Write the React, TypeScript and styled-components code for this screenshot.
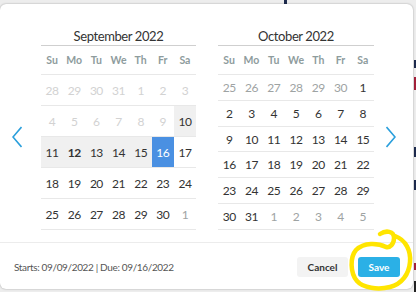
import React from "react";
import styled, { createGlobalStyle } from "styled-components";

const Global = createGlobalStyle`
  html, body { margin: 0; padding: 0; }
  body {
    width: 416px;
    height: 292px;
    overflow: hidden;
    background: #ededed;
    font-family: "Lato", "Noto Sans", sans-serif;
  }
`;

const Stage = styled.div`
  position: relative;
  width: 416px;
  height: 292px;
  padding-top: 4px;
  box-sizing: border-box;
`;

const Mark = styled.span<{ $x: number; $y: number; $w: number; $h: number; $c: string }>`
  position: absolute;
  left: ${(p) => p.$x}px;
  top: ${(p) => p.$y}px;
  width: ${(p) => p.$w}px;
  height: ${(p) => p.$h}px;
  background: ${(p) => p.$c};
`;

const Modal = styled.div`
  position: relative;
  width: 413px;
  height: 285px;
  background: #fff;
  border-radius: 6px;
  box-shadow: 0 0 2px rgba(0, 0, 0, 0.35);
  display: flex;
  flex-direction: column;
`;

const Body = styled.div`
  display: flex;
  padding: 24px 0 0 12px;
`;

const Nav = styled.button<{ $side: "left" | "right" }>`
  border: 0;
  background: transparent;
  padding: 0;
  margin-top: 98px;
  width: 10px;
  height: 22px;
  align-self: flex-start;
  margin-right: ${(p) => (p.$side === "left" ? "19px" : "0")};
  margin-left: ${(p) => (p.$side === "right" ? "12px" : "0")};
  cursor: pointer;
`;

const Calendars = styled.div`
  display: flex;
  gap: 22px;
`;

const Calendar = styled.div<{ $w: number }>`
  width: ${(p) => p.$w}px;
  display: flex;
  flex-direction: column;
`;

const Title = styled.div`
  height: 17px;
  line-height: 17px;
  text-align: center;
  font-size: 13px;
  color: #333;
  letter-spacing: -0.4px;
  border-bottom: 1px solid #cfcfcf;
`;

const HeadRow = styled.div`
  display: grid;
  grid-template-columns: repeat(7, 1fr);
  height: 28px;
  align-items: center;
`;

const HeadCell = styled.div`
  text-align: center;
  font-size: 10.5px;
  font-weight: 700;
  color: #8e9c9d;
`;

const Weeks = styled.div`
  display: flex;
  flex-direction: column;
  height: 155px;
  border-bottom: 1px solid #e8e8e8;
`;

const Week = styled.div`
  flex: 1;
  display: grid;
  grid-template-columns: repeat(7, 1fr);
  border-top: 1px solid #e8e8e8;
`;

type Kind = "disabled" | "outside" | "normal" | "range" | "selected";

const Day = styled.div<{ $kind: Kind; $bold?: boolean }>`
  display: flex;
  align-items: center;
  justify-content: center;
  font-size: 12px;
  letter-spacing: -0.5px;
  font-weight: ${(p) => (p.$bold ? 700 : 400)};
  color: ${(p) =>
    p.$kind === "disabled"
      ? "#d2d2d2"
      : p.$kind === "outside"
      ? "#9ea3a3"
      : p.$kind === "selected"
      ? "#ffffff"
      : "#333"};
  background: ${(p) =>
    p.$kind === "range" ? "#f0f0f0" : p.$kind === "selected" ? "#4a90e2" : "transparent"};
`;

const Footer = styled.div`
  margin-top: 12px;
  border-top: 1px solid #ececec;
  flex: 1;
  display: flex;
  align-items: center;
  padding: 0 13px 0 14px;
`;

const Info = styled.div`
  font-size: 10px;
  color: #555;
  letter-spacing: -0.35px;
  flex: 1;
  padding-top: 2px;
`;

const Btn = styled.button<{ $primary?: boolean }>`
  height: 20px;
  border: 0;
  border-radius: 3px;
  font-family: "Lato", "Noto Sans", sans-serif;
  font-weight: 700;
  font-size: 10px;
  padding: 0;
  width: ${(p) => (p.$primary ? "42px" : "51px")};
  margin-left: ${(p) => (p.$primary ? "10px" : "0")};
  margin-top: 1px;
  color: ${(p) => (p.$primary ? "#fff" : "#333")};
  background: ${(p) => (p.$primary ? "#2bb0e6" : "#f3f3f3")};
`;

const Scribble = styled.svg`
  position: absolute;
  left: 340px;
  top: 225px;
  width: 76px;
  height: 67px;
  overflow: visible;
  pointer-events: none;
`;

const Chevron = ({ dir }: { dir: "left" | "right" }) => (
  <svg width="10" height="22" viewBox="0 0 10 22">
    <path
      d={dir === "left" ? "M9.5 1 L1 11 L9.5 21" : "M0.5 1 L9 11 L0.5 21"}
      fill="none"
      stroke="#2a9fdc"
      strokeWidth="1.6"
    />
  </svg>
);

const HEAD = ["Su", "Mo", "Tu", "We", "Th", "Fr", "Sa"];

type Cell = { n: number; k: Kind; b?: boolean };

const range = (a: number, b: number) => Array.from({ length: b - a + 1 }, (_, i) => a + i);
const cells = (ns: number[], k: Kind): Cell[] => ns.map((n) => ({ n, k }));

const sep: Cell[][] = [
  cells([28, 29, 30, 31, 1, 2, 3], "disabled"),
  [...cells(range(4, 9), "disabled"), { n: 10, k: "range" }],
  [
    { n: 11, k: "range" },
    { n: 12, k: "range", b: true },
    { n: 13, k: "range" },
    { n: 14, k: "range" },
    { n: 15, k: "range" },
    { n: 16, k: "selected" },
    { n: 17, k: "normal" },
  ],
  cells(range(18, 24), "normal"),
  [...cells(range(25, 30), "normal"), { n: 1, k: "outside" }],
];

const oct: Cell[][] = [
  [...cells(range(25, 30), "outside"), { n: 1, k: "normal" }],
  cells(range(2, 8), "normal"),
  cells(range(9, 15), "normal"),
  cells(range(16, 22), "normal"),
  cells(range(23, 29), "normal"),
  [...cells([30, 31], "normal"), ...cells(range(1, 5), "outside")],
];

const Month = ({ title, weeks, w }: { title: string; weeks: Cell[][]; w: number }) => (
  <Calendar $w={w}>
    <Title>{title}</Title>
    <HeadRow>
      {HEAD.map((h) => (
        <HeadCell key={h}>{h}</HeadCell>
      ))}
    </HeadRow>
    <Weeks>
      {weeks.map((wk, i) => (
        <Week key={i}>
          {wk.map((c, j) => (
            <Day key={j} $kind={c.k} $bold={c.b}>
              {c.n}
            </Day>
          ))}
        </Week>
      ))}
    </Weeks>
  </Calendar>
);

export default function App() {
  return (
    <>
      <Global />
      <Stage>
        <Mark $x={284} $y={0} $w={3} $h={4} $c="#1d2a4d" />
        <Mark $x={414} $y={60} $w={2} $h={8} $c="#1d2a4d" />
        <Mark $x={414} $y={77} $w={2} $h={13} $c="#a3203a" />
        <Mark $x={414} $y={147} $w={2} $h={10} $c="#1d2a4d" />
        <Mark $x={414} $y={180} $w={2} $h={10} $c="#1d2a4d" />
        <Mark $x={414} $y={263} $w={2} $h={7} $c="#a3203a" />
        <Mark $x={414} $y={281} $w={2} $h={11} $c="#222" />
        <Modal>
          <Body>
            <Nav $side="left">
              <Chevron dir="left" />
            </Nav>
            <Calendars>
              <Month title="September 2022" weeks={sep} w={155} />
              <Month title="October 2022" weeks={oct} w={156} />
            </Calendars>
            <Nav $side="right">
              <Chevron dir="right" />
            </Nav>
          </Body>
          <Footer>
            <Info>Starts: 09/09/2022 | Due: 09/16/2022</Info>
            <Btn>Cancel</Btn>
            <Btn $primary>Save</Btn>
          </Footer>
        </Modal>
        <Scribble viewBox="0 0 76 67">
          <path
            d="M40 9 C46 5 54 6 54 13 C54 19 50 23 46 22 C38 18 24 17 16 25 C10 32 10 48 17 56 C23 63 38 65 50 62 C62 59 69 49 70 37 C71 26 66 15 55 11"
            fill="none"
            stroke="#ffe500"
            strokeWidth="4.5"
            strokeLinecap="round"
            strokeLinejoin="round"
          />
        </Scribble>
      </Stage>
    </>
  );
}
